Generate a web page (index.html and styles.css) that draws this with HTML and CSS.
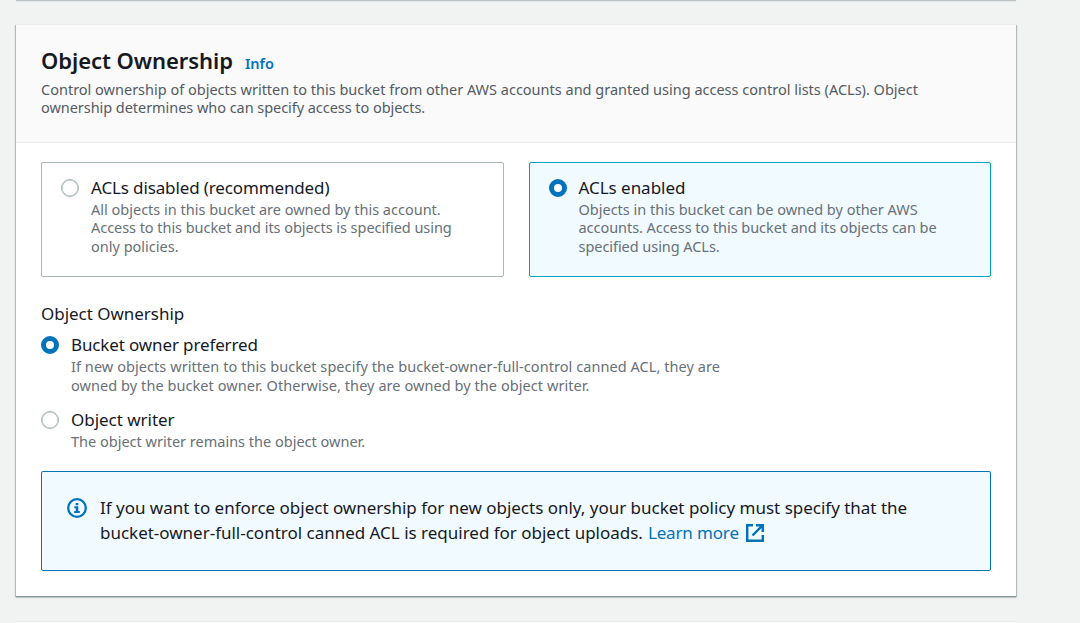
FILE: index.html
```html
<!DOCTYPE html>
<html lang="en">
<head>
<meta charset="utf-8">
<title>Object Ownership</title>
<link rel="stylesheet" href="styles.css">
</head>
<body>
<div class="previous-panel"></div>
<main class="panel">
  <header class="panel-header">
    <div class="heading"><h1>Object Ownership</h1><a class="info">Info</a></div>
    <p class="header-text"><span class="line">Control ownership of objects written to this bucket from other AWS accounts and granted using access control lists (ACLs). Object</span><span class="line tight">ownership determines who can specify access to objects.</span></p>
  </header>
  <section class="panel-body">
    <div class="tiles">
      <div class="tile">
        <span class="radio"></span>
        <div>
          <div class="label snug">ACLs disabled (recommended)</div>
          <p class="hint"><span class="line">All objects in this bucket are owned by this account.</span><span class="line tight">Access to this bucket and its objects is specified using</span><span class="line">only policies.</span></p>
        </div>
      </div>
      <div class="tile selected">
        <span class="radio checked"></span>
        <div>
          <div class="label">ACLs enabled</div>
          <p class="hint"><span class="line">Objects in this bucket can be owned by other AWS</span><span class="line tight">accounts. Access to this bucket and its objects can be</span><span class="line tight">specified using ACLs.</span></p>
        </div>
      </div>
    </div>
    <div class="group-label">Object Ownership</div>
    <div class="option">
      <span class="radio checked"></span>
      <div>
        <div class="label snug">Bucket owner preferred</div>
        <p class="hint"><span class="line loose">If new objects written to this bucket specify the bucket-owner-full-control canned ACL, they are</span><span class="line loose">owned by the bucket owner. Otherwise, they are owned by the object writer.</span></p>
      </div>
    </div>
    <div class="option">
      <span class="radio"></span>
      <div>
        <div class="label">Object writer</div>
        <p class="hint"><span class="line">The object writer remains the object owner.</span></p>
      </div>
    </div>
    <div class="alert">
      <svg class="info-icon" width="20" height="20" viewBox="0 0 20 20"><circle cx="10" cy="10" r="8.8" fill="none" stroke="currentColor" stroke-width="2.3"/><path d="M8.7 5h2.6v2.2H8.7zM7.3 8.2h4v4.7h1.5v2H7.2v-2h1.5v-2.7H7.3z" fill="currentColor"/></svg>
      <p class="alert-text"><span class="line">If you want to enforce object ownership for new objects only, your bucket policy must specify that the</span><span class="line"><span>bucket-owner-full-control canned ACL is required for object uploads.</span><a class="learn">Learn more</a><svg class="external" width="18" height="18" viewBox="0 0 18 18" fill="none" stroke="currentColor" stroke-width="2.4"><path d="M7 1.2H1.2v15.6h15.6V11M10 1.2h6.8V8M16.8 1.2L6.5 11.5"/></svg></span></p>
    </div>
  </section>
</main>
<div class="next-panel"></div>
</body>
</html>
```
FILE: styles.css
```css
* { box-sizing: border-box; }
body {
  margin: 0;
  height: 623px;
  overflow: hidden;
  background: #f1f3f3;
  color: #16191f;
  font-family: "Noto Sans", "Open Sans", sans-serif;
  display: flex;
  flex-direction: column;
}
h1, p { margin: 0; }
.previous-panel { width: 1000px; height: 1px; flex: none; margin: 0 0 24px 16px; background: #bcc3c4; box-shadow: 0 1px 1px #dfe3e3; }
.panel, .next-panel {
  width: 1000px;
  flex: none;
  margin-left: 16px;
  background: #fff;
  box-shadow: 0 -1px 0 #eaeded;
}
.panel {
  height: 572px;
  border-bottom: 1px solid #879596;
  box-shadow: 0 -1px 0 #eaeded, 1px 0 1px rgba(0, 28, 36, .25), -1px 0 1px rgba(0, 28, 36, .25), 0 1px 1px rgba(0, 28, 36, .12);
  clip-path: inset(-1px -3px -3px -3px);
}
.next-panel { height: 20px; margin-top: 25px; background: #fafafa; }
.panel-header { height: 118px; padding: 19px 25px 0; background: #fafafa; border-bottom: 1px solid #eaeded; }
.heading { display: flex; align-items: baseline; height: 36px; line-height: 32px; }
h1 { font-size: 22px; font-weight: 600; width: 204px; white-space: nowrap; letter-spacing: -.05px; }
.info { color: #0073bb; font-size: 14.5px; font-weight: 600; }
.line { display: block; white-space: nowrap; }
.header-text, .hint { font-size: 14.5px; line-height: 18.3px; color: #545b64; }
.tight { letter-spacing: -.05px; }
.loose { letter-spacing: .065px; }
.hint { color: #687078; margin-top: -.5px; }
.panel-body { padding: 19px 25px 0; }
.tiles { display: grid; grid-template-columns: 463px 462px; gap: 25px; }
.tile { display: flex; gap: 12px; height: 115px; padding: 12px 19px; border: 1px solid #aab7b8; border-radius: 2px; }
.tile.selected { border-color: #00a1c9; background: #f1faff; padding-left: 18.5px; }
.tile .hint { margin-top: 0; }
.radio { flex: none; width: 18px; height: 18px; margin-top: 4px; border: 1px solid #aab7b8; box-shadow: inset 0 0 0 .5px #aab7b8; border-radius: 50%; background: #fff; }
.radio.checked { border: 5px solid #0073bb; box-shadow: none; }
.label, .group-label { font-size: 17px; line-height: 25px; letter-spacing: -.03px; white-space: nowrap; }
.label.snug { letter-spacing: -.13px; }
.group-label { margin-top: 24px; }
.option { display: flex; gap: 12px; margin-top: 6px; }
.option .hint { line-height: 19px; }
.option + .option { margin-top: 12.5px; }
.alert { display: flex; gap: 13px; height: 100px; margin-top: 20.4px; padding: 23px 25px; border: 1px solid #0073bb; border-radius: 2px; background: #f1faff; }
.info-icon { flex: none; margin-top: 3px; color: #0073bb; }
.alert-text { font-size: 17px; line-height: 25px; letter-spacing: -.01px; }
.alert-text .line { display: flex; align-items: center; }
.learn { margin-left: 5px; color: #0073bb; letter-spacing: -.15px; }
.external { margin: 1px 0 0 7.5px; color: #0073bb; }
```
